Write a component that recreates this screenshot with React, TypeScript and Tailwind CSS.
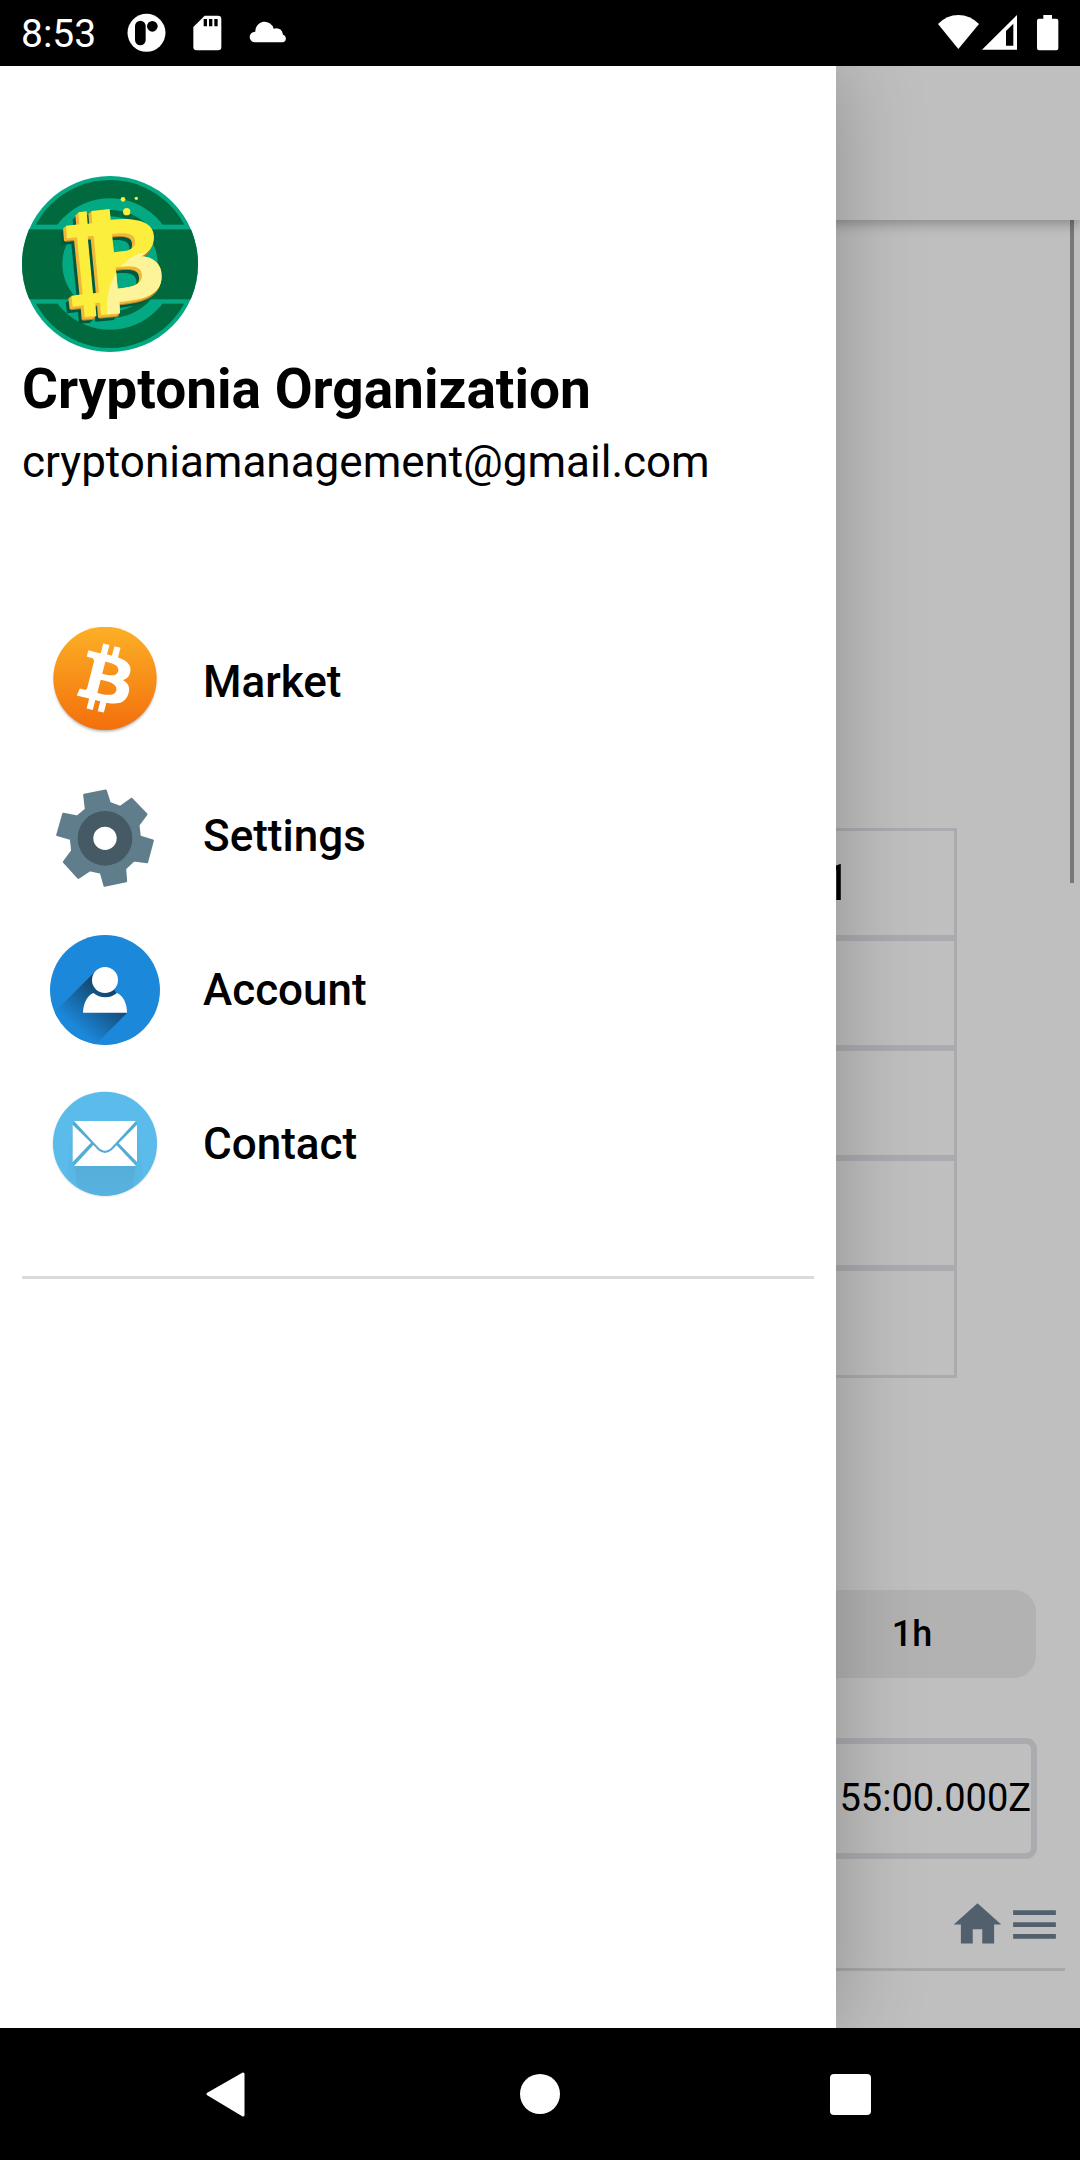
import React from "react";

function StatusBar() {
  return (
    <header className="flex h-[66px] shrink-0 items-center justify-between bg-black pl-[21px] pr-3 text-white">
      <div className="flex items-center">
        <time className="w-[106px] pt-0.5 text-[39px] leading-[44px]">8:53</time>
        <div className="flex gap-5">
          <svg className="size-10" viewBox="381 40 120 120" aria-hidden="true">
            <circle cx="439.500" cy="99.500" r="57" fill="#fff" />
            <rect x="405" y="63" width="32" height="74" rx="16" fill="#000" />
            <circle cx="457" cy="80" r="16" fill="#000" />
          </svg>
          <svg className="size-10" viewBox="561 40 120 120" aria-hidden="true">
            <path d="M614 48H654Q664 48 664 58V142Q664 152 654 152H590Q580 152 580 142V82Z" fill="#fff" />
            <path d="M611 58h10v22h-10zM627 58h10v22h-10zM643 58h10v22h-10z" fill="#000" />
          </svg>
          <svg className="size-10" viewBox="741 40 120 120" aria-hidden="true">
            <path d="M765 128a16 16 0 0 1 0-32h1a28 28 0 0 1 55-9q24-5 28 18a12 12 0 0 1 0 23z" fill="#fff" />
          </svg>
        </div>
      </div>
      <div className="flex items-center">
        <svg className="h-10 w-[42px]" viewBox="114 40 126 120" aria-hidden="true">
          <path d="M114 73Q140 46 175 46T237 73L175 148Z" fill="#fff" />
        </svg>
        <svg className="mr-2 size-10" viewBox="240 40 120 120" aria-hidden="true">
          <path fillRule="evenodd" d="M246 150L351 46V150ZM318 138H340V72L318 94Z" fill="#fff" />
        </svg>
        <svg className="size-10" viewBox="384 40 120 120" aria-hidden="true">
          <path d="M430 46H456V57H469Q475 57 475 63V146Q475 152 469 152H417Q411 152 411 146V63Q411 57 417 57H430Z" fill="#fff" />
        </svg>
      </div>
    </header>
  );
}

const COIN =
  "M205 141L230 138L233 175L247 174L244 137L299 131L302 163C385 154 432 172 432 215C432 245 415 262 392 273C432 274 455 298 455 332C455 380 420 402 328 409L330 444L273 449L270 412L256 413L259 452L224 455L221 420L188 424L184 391L218 387L201 216L171 219L168 181L208 177ZM306 206L312 261L334 258C365 256 377 246 375 226C373 204 350 201 306 206ZM317 306L323 370L345 367C380 363 398 350 396 328C394 302 370 299 317 306ZM233 213L249 384L267 382L251 212Z";

function BrandLogo() {
  return (
    <svg className="size-44" viewBox="36 32 528 528" role="img" aria-label="Cryptonia logo">
      <defs>
        <clipPath id="brandOuter">
          <circle cx="300" cy="296" r="264" />
        </clipPath>
        <clipPath id="brandInner">
          <circle cx="300" cy="296" r="252" />
        </clipPath>
        <clipPath id="brandCoin">
          <path d={COIN} clipRule="evenodd" />
        </clipPath>
      </defs>
      <circle cx="300" cy="296" r="264" fill="#03a982" />
      <g clipPath="url(#brandInner)" fill="#00693e">
        <rect x="36" y="32" width="528" height="146" />
        <rect x="36" y="415" width="528" height="146" />
      </g>
      <circle cx="300" cy="296" r="197" fill="#03a982" />
      <circle cx="300" cy="296" r="162" fill="#00693e" />
      <rect x="36" y="192" width="528" height="210" fill="#00693e" clipPath="url(#brandOuter)" />
      <circle cx="300" cy="296" r="143" fill="#03a982" />
      <g fillRule="evenodd" fill="#00593f">
        <path d={COIN} transform="translate(-17 20)" />
        <path d={COIN} transform="translate(-12 15)" />
      </g>
      <g fillRule="evenodd" fill="#b8822d">
        <path d={COIN} transform="translate(-6 11)" />
        <path d={COIN} transform="translate(-3 8)" />
      </g>
      <g fillRule="evenodd" fill="#f0b83a">
        <path d={COIN} transform="translate(-9 8)" />
        <path d={COIN} transform="translate(-6 5)" />
        <path d={COIN} transform="translate(-3 3)" />
      </g>
      <path d={COIN} fillRule="evenodd" fill="#fcee3d" />
      <path d="M293 460C280 360 325 270 420 258L480 260V460Z" fill="#fdf49a" clipPath="url(#brandCoin)" />
      <g fill="#fcee3d">
        <circle cx="350" cy="139" r="11" />
        <circle cx="339" cy="102" r="7" />
        <circle cx="379" cy="99" r="5" />
      </g>
    </svg>
  );
}

function MarketIcon() {
  return (
    <svg className="size-[110px]" viewBox="30 51 330 330" aria-hidden="true">
      <defs>
        <linearGradient id="marketFill" x1="0" y1="0" x2="0" y2="1">
          <stop offset="0" stopColor="#fcb026" />
          <stop offset="1" stopColor="#f36f0c" />
        </linearGradient>
        <filter id="marketShadow">
          <feGaussianBlur stdDeviation="4" />
        </filter>
      </defs>
      <circle cx="195" cy="212" r="152" fill="#000" opacity="0.35" filter="url(#marketShadow)" />
      <circle cx="195" cy="205" r="155" fill="url(#marketFill)" />
      <path
        transform="translate(23 38) scale(10.7 10.4)"
        fill="#fff"
        d="M23.189 14.02c.314-2.096-1.283-3.223-3.465-3.975l.708-2.84-1.728-.43-.69 2.765c-.454-.114-.92-.22-1.385-.326l.695-2.783L15.596 6l-.708 2.839c-.376-.086-.746-.17-1.104-.26l.002-.009-2.384-.595-.46 1.846s1.283.294 1.256.312c.7.175.826.638.805 1.006l-.806 3.235c.048.012.11.03.18.057l-.183-.045-1.13 4.532c-.086.212-.303.531-.793.41.018.025-1.256-.313-1.256-.313l-.858 1.978 2.25.561c.418.105.828.215 1.231.318l-.715 2.872 1.727.43.708-2.84c.472.127.93.245 1.378.357l-.706 2.828 1.728.43.715-2.866c2.948.558 5.164.333 6.097-2.333.752-2.146-.037-3.385-1.588-4.192 1.13-.26 1.98-1.003 2.207-2.538zm-3.95 5.538c-.533 2.147-4.148.986-5.32.695l.95-3.805c1.172.293 4.929.872 4.37 3.11zm.535-5.569c-.487 1.953-3.495.96-4.47.717l.86-3.45c.975.243 4.118.696 3.61 2.733z"
      />
    </svg>
  );
}

function SettingsIcon() {
  return (
    <svg className="size-[110px]" viewBox="30 513 330 330" aria-hidden="true">
      <path
        d="M133 555L197 542L209 579L241 591L275 567L319 613L295 645L299 680L338 692L321 756L281 751L255 776L258 813L194 827L183 788L150 780L115 803L72 756L97 722L93 687L52 675L70 612L112 620L138 598Z"
        fill="#607d8b"
        stroke="#607d8b"
        strokeWidth="7"
        strokeLinejoin="round"
      />
      <circle cx="195" cy="685" r="82" fill="#455a64" />
      <circle cx="195" cy="685" r="35" fill="#fff" />
    </svg>
  );
}

function AccountIcon() {
  return (
    <svg className="size-[110px]" viewBox="30 45 330 330" aria-hidden="true">
      <defs>
        <clipPath id="accountClip">
          <circle cx="195" cy="210" r="165" />
        </clipPath>
        <linearGradient id="accountShade" gradientUnits="userSpaceOnUse" x1="205" y1="215" x2="110" y2="325">
          <stop offset="0" stopColor="#14456d" />
          <stop offset="0.500" stopColor="#1766a2" />
          <stop offset="1" stopColor="#1b88da" />
        </linearGradient>
      </defs>
      <circle cx="195" cy="210" r="165" fill="#1b88da" />
      <path d="M167 153L20 300L100 440L261 279L222 208Z" fill="url(#accountShade)" clipPath="url(#accountClip)" />
      <circle cx="195" cy="180" r="39" fill="#fff" />
      <path d="M129 278C130 245 145 225 160 219C180 236 212 236 231 219C250 228 261 250 261 278Z" fill="#fff" />
    </svg>
  );
}

function ContactIcon() {
  return (
    <svg className="size-[110px]" viewBox="30 507 330 330" aria-hidden="true">
      <defs>
        <filter id="contactShadow">
          <feGaussianBlur stdDeviation="3" />
        </filter>
        <linearGradient id="contactShade" x1="0" y1="0" x2="0" y2="1">
          <stop offset="0" stopColor="#52a8d0" />
          <stop offset="1" stopColor="#58b2df" />
        </linearGradient>
      </defs>
      <circle cx="195" cy="673" r="155" fill="#000" opacity="0.22" filter="url(#contactShadow)" />
      <circle cx="195" cy="671" r="156" fill="#5bbceb" />
      <path d="M98 620L80 765Q125 826 195 827T309 765L291 620Z" fill="#59b7e5" />
      <path d="M98 614L102 603H288L291 614V726L286 742L279 802Q240 827 195 827T113 802L103 742L98 726Z" fill="url(#contactShade)" />
      <g fill="#fff">
        <path d="M102 603H288L216 681Q195 704 174 681Z" />
        <path d="M98 614L153 668L98 726ZM291 614L236 670L291 726Z" />
        <path d="M102 738L160 675L174 690Q195 708 216 690L230 676L288 738Z" />
      </g>
    </svg>
  );
}

const MENU = [
  { label: "Market", Icon: MarketIcon },
  { label: "Settings", Icon: SettingsIcon },
  { label: "Account", Icon: AccountIcon },
  { label: "Contact", Icon: ContactIcon },
];

function Drawer() {
  return (
    <aside className="absolute inset-y-0 left-0 w-[836px] max-w-[80%] bg-white px-[22px] pt-[110px] text-black shadow-[0_0_80px_rgba(0,0,0,0.25)]">
      <BrandLogo />
      <h1 className="pt-[3px] text-[55px] font-bold leading-[68px]">Cryptonia Organization</h1>
      <p className="pt-[5px] text-[44px] leading-[68px]">cryptoniamanagement@gmail.com</p>
      <nav className="pt-[109px]">
        <ul>
          {MENU.map(({ label, Icon }) => (
            <li key={label}>
              <a href="#" className="flex h-[154px] items-center gap-[43px] px-7 text-[44px] font-medium leading-[52px]">
                <Icon />
                {label}
              </a>
            </li>
          ))}
        </ul>
      </nav>
      <hr className="mt-[55px] border-t-[3px] border-[#dadada]" />
    </aside>
  );
}

function MarketPage() {
  return (
    <main className="flex flex-1 flex-col bg-white text-black">
      <div className="z-10 h-[154px] shrink-0 bg-white shadow-[0_4px_12px_rgba(0,0,0,0.28)]" />
      <div className="relative flex-1 pb-14">
        <div className="absolute right-[6px] top-0 h-[663px] w-1 bg-[#a0a0a0]" />
        <div className="px-[123px] pt-[608px]">
          <table className="w-full border-separate border-spacing-0">
            <tbody>
              {["1", "", "", "", ""].map((value, i) => (
                <tr key={i}>
                  <td className="h-[110px] border-[3px] border-[#e2e4e9] p-0 pr-[103px] text-right text-[50px] leading-[58px]">
                    {value}
                  </td>
                </tr>
              ))}
            </tbody>
          </table>
        </div>
        <div className="flex justify-end px-11 pt-[212px]">
          <button type="button" className="h-[88px] w-[248px] rounded-[22px] bg-[#eeeeee] text-[36px] font-medium leading-[42px]">
            1h
          </button>
        </div>
        <div className="px-[43px] pt-[60px]">
          <input
            type="text"
            readOnly
            aria-label="Last update"
            defaultValue="55:00.000Z"
            className="block h-[121px] w-full rounded-[11px] border-[6px] border-[#e2e4e9] bg-white pb-0.5 text-right text-[38px] outline-none"
          />
        </div>
        <div className="flex justify-end pr-[17px] pt-[37px] text-[#6e8192]">
          <button type="button" aria-label="Home">
            <svg className="size-[57px]" viewBox="0 0 24 24" fill="currentColor" aria-hidden="true">
              <path d="M10 20v-6h4v6h5v-8h3L12 3 2 12h3v8z" />
            </svg>
          </button>
          <button type="button" aria-label="Menu">
            <svg className="size-[57px]" viewBox="0 0 24 24" fill="currentColor" aria-hidden="true">
              <path d="M3 18h18v-2H3v2zm0-5h18v-2H3v2zm0-7v2h18V6H3z" />
            </svg>
          </button>
        </div>
        <hr className="mx-[15px] mt-[15px] border-t-[3px] border-[#e1e1e1]" />
      </div>
    </main>
  );
}

function NavigationBar() {
  return (
    <footer className="grid h-[132px] shrink-0 grid-cols-3 items-center bg-black px-[74px]">
      <button type="button" aria-label="Back" className="flex justify-center">
        <svg className="size-12" viewBox="0 0 48 48" aria-hidden="true">
          <path d="M3 24L38 4V45Z" fill="#fff" stroke="#fff" strokeWidth="3" strokeLinejoin="round" />
        </svg>
      </button>
      <button type="button" aria-label="Home screen" className="flex justify-center">
        <span className="size-10 rounded-full bg-white" />
      </button>
      <button type="button" aria-label="Recent apps" className="flex justify-center">
        <span className="size-[41px] rounded bg-white" />
      </button>
    </footer>
  );
}

export default function App() {
  return (
    <div className="flex min-h-screen flex-col bg-black font-['Roboto',sans-serif]">
      <StatusBar />
      <div className="relative flex flex-1 flex-col overflow-hidden">
        <MarketPage />
        <div className="absolute inset-0 z-20 bg-black/25">
          <Drawer />
        </div>
      </div>
      <NavigationBar />
    </div>
  );
}
